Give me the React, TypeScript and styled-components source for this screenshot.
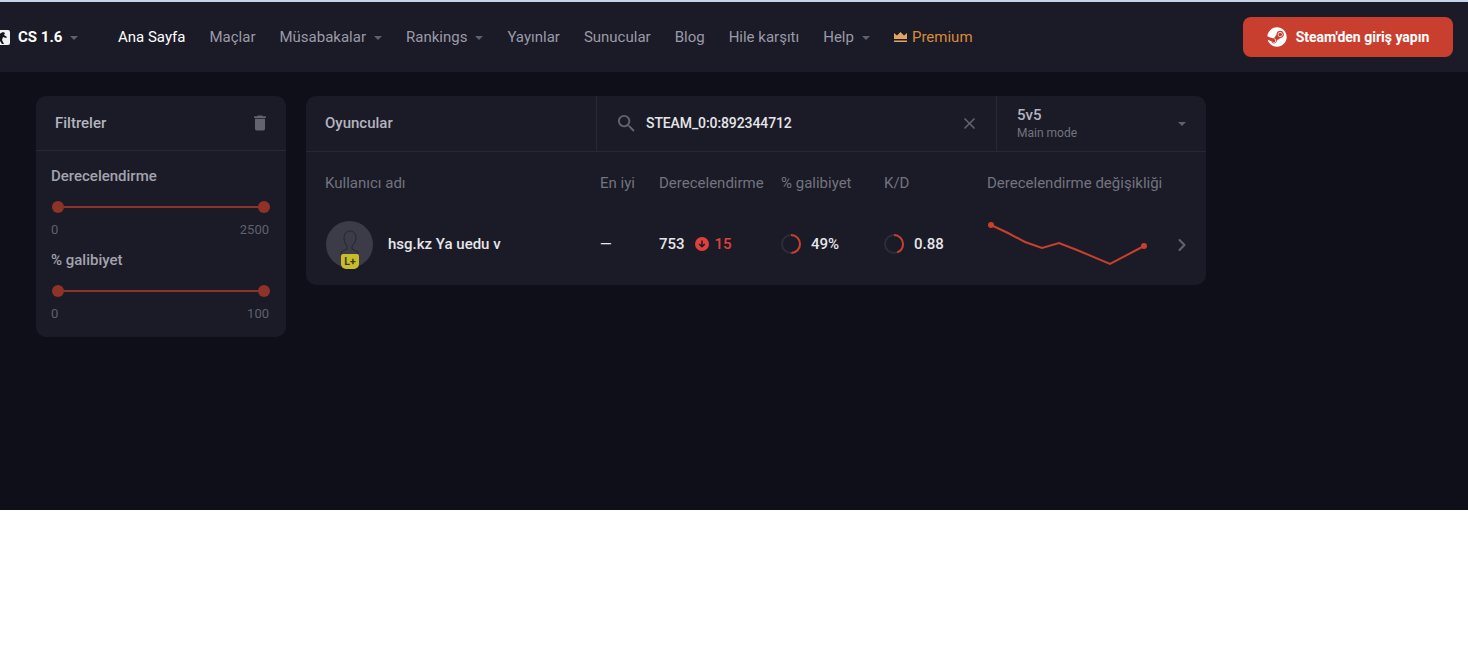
import React from 'react';
import styled, { createGlobalStyle } from 'styled-components';
import { FaSteam } from 'react-icons/fa';
import { MdClose, MdDelete, MdSearch } from 'react-icons/md';
import { ChevronRight } from 'lucide-react';

const GlobalStyle = createGlobalStyle`
  html, body {
    margin: 0;
    background: #fff;
    font-family: Roboto, "Liberation Sans", sans-serif;
  }
  * { box-sizing: border-box; }
`;

const Page = styled.div`
  background: #0f0f19;
  border-top: 2px solid #c6d4ea;
  height: 510px;
  overflow: hidden;
`;

const NavBar = styled.header`
  align-items: center;
  background: #1a1b26;
  display: flex;
  height: 70px;
  padding: 0 15px 0 0;
`;

const Logo = styled.div`
  align-items: center;
  color: #fff;
  display: flex;
  font-size: 15px;
  font-weight: 700;
  margin-left: -6px;
  width: 124px;
`;

const LogoMark = styled.svg`
  height: 15px;
  margin-right: 8px;
  width: 16px;
`;

const NavLinks = styled.nav`
  align-items: center;
  display: flex;
  flex: 1;
  gap: 24px;
`;

const NavLink = styled.span<{ $active?: boolean; $premium?: boolean }>`
  align-items: center;
  color: ${({ $active, $premium }) => ($active ? '#fff' : $premium ? '#d98a3d' : '#9a9aa8')};
  display: flex;
  font-size: 15px;
`;

const Caret = styled.i<{ $gap?: number }>`
  border-left: 4px solid transparent;
  border-right: 4px solid transparent;
  border-top: 4px solid #5f606e;
  display: block;
  height: 0;
  margin-left: ${({ $gap }) => $gap ?? 8}px;
  margin-top: 1px;
  width: 0;
`;

const Crown = styled.svg`
  height: 12px;
  margin-right: 5px;
  width: 13px;
`;

const SteamButton = styled.button`
  align-items: center;
  background: #c93f2f;
  border: 0;
  border-radius: 8px;
  color: #fff;
  display: flex;
  font-family: inherit;
  font-size: 14px;
  font-weight: 700;
  gap: 9px;
  height: 40px;
  justify-content: center;
  width: 210px;
`;

const Content = styled.main`
  align-items: flex-start;
  display: flex;
  gap: 20px;
  padding: 24px 0 0 36px;
`;

const Card = styled.section`
  background: #1a1b26;
  border-radius: 10px;
`;

const FilterCard = styled(Card)`
  height: 241px;
  width: 250px;
`;

const FilterHead = styled.div`
  align-items: center;
  border-bottom: 1px solid #272834;
  color: #b4b4bf;
  display: flex;
  font-size: 15px;
  font-weight: 500;
  height: 55px;
  justify-content: space-between;
  padding: 0 16px 0 19px;
`;

const TrashIcon = styled(MdDelete)`
  color: #62636f;
  font-size: 20px;
`;

const FilterBody = styled.div`
  padding: 16px 16px 0 15px;
`;

const FilterGroup = styled.div`
  margin-bottom: 13px;
`;

const FilterLabel = styled.div`
  color: #a3a3ae;
  font-size: 15px;
  font-weight: 500;
  line-height: 18px;
`;

const Slider = styled.div`
  align-items: center;
  display: flex;
  height: 12px;
  margin: 16px 0 9px 1px;
`;

const Thumb = styled.i`
  background: #8f3329;
  border-radius: 50%;
  display: block;
  flex: none;
  height: 12px;
  width: 12px;
`;

const Track = styled.i`
  background: #8f3329;
  display: block;
  flex: 1;
  height: 2px;
`;

const SliderEnds = styled.div`
  color: #5f606c;
  display: flex;
  font-size: 13px;
  justify-content: space-between;
  line-height: 16px;
  padding-right: 1px;
`;

const PlayersCard = styled(Card)`
  height: 189px;
  width: 900px;
`;

const Toolbar = styled.div`
  border-bottom: 1px solid #272834;
  display: grid;
  grid-template-columns: 291px 400px 209px;
  height: 56px;
`;

const ToolbarTitle = styled.div`
  align-items: center;
  border-right: 1px solid #272834;
  color: #b4b4bf;
  display: flex;
  font-size: 15px;
  font-weight: 500;
  padding: 0 0 1px 19px;
`;

const SearchBox = styled.div`
  align-items: center;
  border-right: 1px solid #272834;
  color: #e6e6ea;
  display: flex;
  font-size: 14px;
  font-weight: 500;
  letter-spacing: -0.1px;
  padding: 0 17px 1px 18px;
`;

const SearchIcon = styled(MdSearch)`
  color: #62636f;
  flex: none;
  font-size: 23px;
  margin-right: 8px;
`;

const SearchValue = styled.span`
  flex: 1;
`;

const ClearIcon = styled(MdClose)`
  color: #62636f;
  font-size: 19px;
`;

const ModeSelect = styled.div`
  align-items: center;
  display: flex;
  justify-content: space-between;
  padding: 0 20px;
`;

const ModeTitle = styled.div`
  color: #b4b4bf;
  font-size: 15px;
  font-weight: 500;
  line-height: 17px;
`;

const ModeSub = styled.div`
  color: #72737f;
  font-size: 12px;
  line-height: 16px;
  margin-top: 1px;
`;

const Row = styled.div`
  align-items: center;
  display: grid;
  grid-template-columns: 275px 59px 122px 103px 103px 1fr;
  padding-left: 19px;
`;

const HeadRow = styled(Row)`
  color: #72737f;
  font-size: 15px;
  height: 62px;
`;

const DataRow = styled(Row)`
  color: #e6e6ea;
  font-size: 15px;
  font-weight: 500;
  height: 70px;
  margin-top: -5px;
`;

const Player = styled.div`
  align-items: center;
  display: flex;
  gap: 15px;
`;

const Avatar = styled.div`
  background: #3b3c48;
  border-radius: 50%;
  flex: none;
  height: 47px;
  margin-left: 1px;
  position: relative;
  width: 47px;
`;

const Silhouette = styled.svg`
  height: 47px;
  width: 47px;
`;

const Level = styled.span`
  align-items: center;
  background: #c8bc2c;
  border-radius: 2px 2px 5px 5px;
  bottom: -1px;
  color: #3b3a18;
  display: flex;
  font-size: 10.5px;
  font-weight: 700;
  height: 15px;
  justify-content: center;
  left: 15px;
  position: absolute;
  width: 18px;
`;

const Stat = styled.div`
  align-items: center;
  display: flex;
`;

const Drop = styled.span`
  align-items: center;
  color: #e0403c;
  display: flex;
  font-weight: 500;
  gap: 6px;
  margin-left: 10px;
`;

const DropIcon = styled.svg`
  height: 14px;
  width: 14px;
`;

const Ring = styled.svg`
  height: 20px;
  margin-right: 10px;
  transform: rotate(-90deg);
  width: 20px;
`;

const Trend = styled.div`
  align-items: center;
  display: flex;
`;

const Spark = styled.svg`
  height: 48px;
  width: 164px;
`;

const RowArrow = styled(ChevronRight)`
  color: #62636f;
  margin: 2px 0 0 21px;
`;

const ProgressRing: React.FC<{ value: number }> = ({ value }) => {
  const length = 2 * Math.PI * 9;
  return (
    <Ring viewBox="0 0 20 20">
      <circle cx="10" cy="10" r="9" fill="none" stroke="#2c2d39" strokeWidth="2" />
      <circle
        cx="10"
        cy="10"
        r="9"
        fill="none"
        stroke="#c93f2f"
        strokeWidth="2"
        strokeDasharray={`${length * value} ${length}`}
      />
    </Ring>
  );
};

const FilterSlider: React.FC<{ label: string; max: number }> = ({ label, max }) => (
  <FilterGroup>
    <FilterLabel>{label}</FilterLabel>
    <Slider>
      <Thumb />
      <Track />
      <Thumb />
    </Slider>
    <SliderEnds>
      <span>0</span>
      <span>{max}</span>
    </SliderEnds>
  </FilterGroup>
);

const App: React.FC = () => (
  <Page>
    <GlobalStyle />
    <NavBar>
      <Logo>
        <LogoMark viewBox="0 0 16 15">
          <rect width="16" height="15" rx="2" fill="#f2f2f2" />
          <path d="M9 2l2 1-1 2 3 2-1 1-3-1-1 3 2 4H8L6 11l-2 3H3l2-6 1-3-2 1V5l3-2z" fill="#15151c" />
        </LogoMark>
        CS 1.6
        <Caret $gap={8} />
      </Logo>
      <NavLinks>
        <NavLink $active>Ana Sayfa</NavLink>
        <NavLink>Maçlar</NavLink>
        <NavLink>
          Müsabakalar
          <Caret />
        </NavLink>
        <NavLink>
          Rankings
          <Caret />
        </NavLink>
        <NavLink>Yayınlar</NavLink>
        <NavLink>Sunucular</NavLink>
        <NavLink>Blog</NavLink>
        <NavLink>Hile karşıtı</NavLink>
        <NavLink>
          Help
          <Caret />
        </NavLink>
        <NavLink $premium>
          <Crown viewBox="0 0 13 12">
            <path d="M0 2l3 2.500L6.500 1 10 4.500 13 2v6H0zM0 9.500h13V11H0z" fill="#e0a560" />
          </Crown>
          Premium
        </NavLink>
      </NavLinks>
      <SteamButton>
        <FaSteam size={20} />
        Steam'den giriş yapın
      </SteamButton>
    </NavBar>
    <Content>
      <FilterCard>
        <FilterHead>
          Filtreler
          <TrashIcon />
        </FilterHead>
        <FilterBody>
          <FilterSlider label="Derecelendirme" max={2500} />
          <FilterSlider label="% galibiyet" max={100} />
        </FilterBody>
      </FilterCard>
      <PlayersCard>
        <Toolbar>
          <ToolbarTitle>Oyuncular</ToolbarTitle>
          <SearchBox>
            <SearchIcon />
            <SearchValue>STEAM_0:0:892344712</SearchValue>
            <ClearIcon />
          </SearchBox>
          <ModeSelect>
            <div>
              <ModeTitle>5v5</ModeTitle>
              <ModeSub>Main mode</ModeSub>
            </div>
            <Caret />
          </ModeSelect>
        </Toolbar>
        <HeadRow>
          <span>Kullanıcı adı</span>
          <span>En iyi</span>
          <span>Derecelendirme</span>
          <span>% galibiyet</span>
          <span>K/D</span>
          <span>Derecelendirme değişikliği</span>
        </HeadRow>
        <DataRow>
          <Player>
            <Avatar>
              <Silhouette viewBox="0 0 47 47">
                <path
                  d="M24 10c-4 0-6 3-6 7 0 3 1 6 3 8v3l-6 3v3h17v-3l-6-3v-3c2-2 4-5 4-8 0-4-2-7-6-7z"
                  fill="#3b3c48"
                  stroke="#24252f"
                  strokeWidth="1"
                />
              </Silhouette>
              <Level>L+</Level>
            </Avatar>
            hsg.kz Ya uedu v
          </Player>
          <span>—</span>
          <Stat>
            753
            <Drop>
              <DropIcon viewBox="0 0 14 14">
                <circle cx="7" cy="7" r="7" fill="#e0403c" />
                <path d="M7 3.500v6M4.200 7L7 9.800 9.800 7" fill="none" stroke="#1a1b26" strokeWidth="1.500" />
              </DropIcon>
              15
            </Drop>
          </Stat>
          <Stat>
            <ProgressRing value={0.49} />
            49%
          </Stat>
          <Stat>
            <ProgressRing value={0.44} />
            0.88
          </Stat>
          <Trend>
            <Spark viewBox="0 0 164 48">
              <polyline
                points="4,5 21,13 38,22 55,28 72,23 90,30 123,44 157,26"
                fill="none"
                stroke="#c93f2f"
                strokeWidth="2"
              />
              <circle cx="4" cy="5" r="3" fill="#c93f2f" />
              <circle cx="157" cy="26" r="3" fill="#c93f2f" />
            </Spark>
            <RowArrow size={20} strokeWidth={2.5} />
          </Trend>
        </DataRow>
      </PlayersCard>
    </Content>
  </Page>
);

export default App;
